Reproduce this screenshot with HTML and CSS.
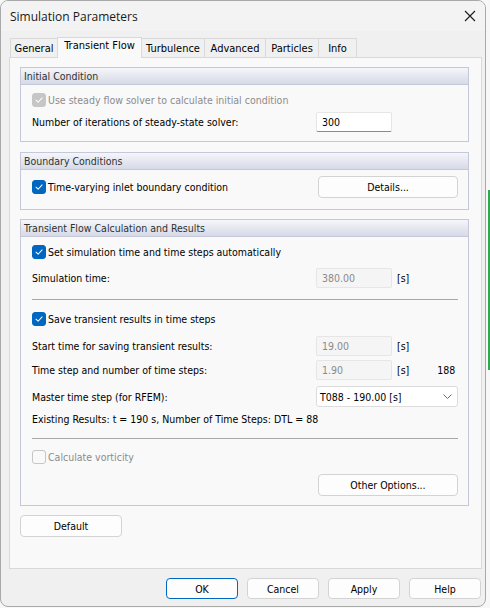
FILE: index.html
```html
<!DOCTYPE html>
<html lang="en">
<head>
<meta charset="utf-8">
<title>Simulation Parameters</title>
<link rel="stylesheet" href="styles.css">
</head>
<body>
<div class="desktop">
  <div class="window">
    <div class="titlebar">
      <span class="title">Simulation Parameters</span>
      <svg class="close" width="12" height="12" viewBox="0 0 12 12"><path d="M1 1 L11 11 M11 1 L1 11" stroke="#1a1a1a" stroke-width="1.1" fill="none"/></svg>
    </div>
    <div class="client">
      <div class="tabs">
        <div class="tab tab-general">General</div>
        <div class="tab tab-transient active">Transient Flow</div>
        <div class="tab tab-turbulence">Turbulence</div>
        <div class="tab tab-advanced">Advanced</div>
        <div class="tab tab-particles">Particles</div>
        <div class="tab tab-info">Info</div>
      </div>
      <div class="panel">
        <section class="group g-initial">
          <div class="group-head">Initial Condition</div>
          <div class="group-body">
            <div class="row">
              <span class="check checked disabled"><svg viewBox="0 0 14 14"><path d="M3.5 7.2 L6 9.6 L10.6 4.6" /></svg></span>
              <span class="label disabled-text">Use steady flow solver to calculate initial condition</span>
            </div>
            <div class="row m2">
              <span class="label field-label">Number of iterations of steady-state solver:</span>
              <span class="input">300</span>
            </div>
          </div>
        </section>

        <section class="group g-boundary">
          <div class="group-head">Boundary Conditions</div>
          <div class="group-body">
            <div class="row tall">
              <span class="check checked"><svg viewBox="0 0 14 14"><path d="M3.5 7.2 L6 9.6 L10.6 4.6" /></svg></span>
              <span class="label grow">Time-varying inlet boundary condition</span>
              <span class="button wide">Details...</span>
            </div>
          </div>
        </section>

        <section class="group g-transient">
          <div class="group-head">Transient Flow Calculation and Results</div>
          <div class="group-body">
            <div class="row">
              <span class="check checked"><svg viewBox="0 0 14 14"><path d="M3.5 7.2 L6 9.6 L10.6 4.6" /></svg></span>
              <span class="label">Set simulation time and time steps automatically</span>
            </div>
            <div class="row m6">
              <span class="label field-label">Simulation time:</span>
              <span class="input disabled">380.00</span>
              <span class="unit">[s]</span>
            </div>
            <div class="separator s1"></div>
            <div class="row m9">
              <span class="check checked"><svg viewBox="0 0 14 14"><path d="M3.5 7.2 L6 9.6 L10.6 4.6" /></svg></span>
              <span class="label">Save transient results in time steps</span>
            </div>
            <div class="row m7">
              <span class="label field-label">Start time for saving transient results:</span>
              <span class="input disabled">19.00</span>
              <span class="unit">[s]</span>
            </div>
            <div class="row m4">
              <span class="label field-label">Time step and number of time steps:</span>
              <span class="input disabled">1.90</span>
              <span class="unit">[s]</span>
              <span class="count">188</span>
            </div>
            <div class="row m6 tall21">
              <span class="label field-label">Master time step (for RFEM):</span>
              <span class="select">T088 - 190.00 [s]
                <svg class="chev" width="9" height="5" viewBox="0 0 9 5"><path d="M0.5 0.5 L4.5 4.5 L8.5 0.5" stroke="#6a6a6a" stroke-width="1" fill="none"/></svg>
              </span>
            </div>
            <div class="row m2">
              <span class="label">Existing Results: t = 190 s, Number of Time Steps: DTL = 88</span>
            </div>
            <div class="separator s2"></div>
            <div class="row m8">
              <span class="check disabled"></span>
              <span class="label disabled-text">Calculate vorticity</span>
            </div>
            <div class="row m7 tall end">
              <span class="button wide">Other Options...</span>
            </div>
          </div>
        </section>

        <div class="default-row">
          <span class="button default-btn">Default</span>
        </div>
      </div>
      <div class="footer">
        <span class="button foot focus">OK</span>
        <span class="button foot">Cancel</span>
        <span class="button foot">Apply</span>
        <span class="button foot">Help</span>
      </div>
    </div>
  </div>
  <div class="side-strip"></div>
</div>
</body>
</html>
```
FILE: styles.css
```css
* { box-sizing: border-box; }

html, body {
  margin: 0;
  padding: 0;
}

body {
  width: 490px;
  height: 608px;
  background: #f7f7f7;
  font-family: "DejaVu Sans Condensed", "DejaVu Sans", sans-serif;
  font-size: 10.5px;
  color: #000;
  overflow: hidden;
}

.desktop {
  position: relative;
  width: 490px;
  height: 608px;
}

/* thin strip of another window peeking out on the right */
.side-strip {
  position: absolute;
  left: 488px;
  top: 190px;
  width: 2px;
  height: 180px;
  background: #2fa84f;
}

.window {
  width: 486px;
  height: 607px;
  border: 1px solid #a9a9a9;
  border-radius: 8px;
  background: #f0f0f0;
  overflow: hidden;
  display: flex;
  flex-direction: column;
}

.titlebar {
  height: 30px;
  flex: none;
  display: flex;
  align-items: center;
  justify-content: space-between;
  padding: 0 9px 0 9px;
  background: #f3f3f3;
}

.title {
  font-family: "Open Sans", "Noto Sans", sans-serif;
  font-size: 12px;
  color: #1a1a1a;
  margin-top: 1px;
}

.client {
  flex: 1;
  display: flex;
  flex-direction: column;
  padding: 7px 0 0 8px;
}

/* tab strip */
.tabs {
  display: flex;
  align-items: flex-end;
  height: 19px;
  padding-left: 1px;
  position: relative;
  z-index: 1;
}

.tab {
  height: 19px;
  line-height: 19px;
  text-align: center;
  border: 1px solid #d9d9d9;
  border-bottom: none;
  border-left: none;
  background: #f0f0f0;
  color: #000;
  font-size: 11px;
}

.tab:first-child {
  border-left: 1px solid #d9d9d9;
}

.tab-general { width: 48px; }
.tab-transient { width: 85px; }
.tab-turbulence { width: 63px; }
.tab-advanced { width: 61px; }
.tab-particles { width: 53px; }
.tab-info { width: 38px; }

.tab.active {
  height: 21px;
  line-height: 16px;
  background: #f9f9f9;
  border-left: 1px solid #d9d9d9;
  margin-left: -1px;
  margin-bottom: -1px;
}

.tab.active + .tab {
  border-left: none;
}

.panel {
  width: 473px;
  height: 512px;
  border: 1px solid #d9d9d9;
  background: #f9f9f9;
  padding: 9px 12px 0 10px;
}

/* group boxes */
.group {
  border: 1px solid #c4c8d8;
  background: #f9f9f9;
}

.g-boundary { margin-top: 10px; }
.g-transient { margin-top: 9px; }

.group-head {
  height: 17px;
  line-height: 16px;
  padding-left: 3px;
  color: #303030;
  background: linear-gradient(#f5f6fa, #d6dae7);
  border-bottom: 1px solid #c4c8d8;
}

.group-body {
  padding: 5px 10px 9px 11px;
}

.g-boundary .group-body { padding-top: 6px; padding-bottom: 11px; }
.g-transient .group-body { padding-top: 5px; padding-bottom: 9px; }

.row {
  display: flex;
  align-items: center;
  height: 20px;
}

.row.tall { height: 22px; }
.row.tall21 { height: 21px; }
.row.end { justify-content: flex-end; }

.m2 { margin-top: 2px; }
.m4 { margin-top: 4px; }
.m6 { margin-top: 6px; }
.m7 { margin-top: 7px; }
.m8 { margin-top: 8px; }
.m9 { margin-top: 9px; }

.separator {
  height: 1px;
  background: #a8a8a8;
}

.separator.s1 { margin-top: 11px; }
.separator.s2 { margin-top: 9px; }

.label { white-space: nowrap; }
.label.grow { flex: 1; }
.field-label { width: 284px; flex: none; }
.disabled-text { color: #8c8c8c; }

.check {
  width: 14px;
  height: 14px;
  flex: none;
  border-radius: 3px;
  margin-right: 2px;
  border: 1px solid #8a8a8a;
  background: #fff;
}

.check svg {
  display: block;
  width: 12px;
  height: 12px;
}

.check svg path {
  fill: none;
  stroke: #fff;
  stroke-width: 1.2;
  stroke-linecap: round;
  stroke-linejoin: round;
}

.check.checked {
  background: #0067c0;
  border-color: #0067c0;
}

.check.checked.disabled {
  background: #c6c6c6;
  border-color: #c6c6c6;
}

.check.disabled {
  border-color: #c6c6c6;
  background: #f9f9f9;
}

.input {
  width: 76px;
  height: 20px;
  flex: none;
  line-height: 18px;
  padding-left: 5px;
  background: #fff;
  border: 1px solid #e6e6e6;
  border-bottom-color: #8a8a8a;
  border-radius: 2px;
}

.input.disabled {
  background: #f5f5f5;
  color: #8a8a8a;
  border-bottom-color: #e6e6e6;
}

.unit {
  margin-left: 5px;
}

.count {
  margin-left: 28px;
}

.select {
  width: 142px;
  height: 21px;
  flex: none;
  display: flex;
  align-items: center;
  justify-content: space-between;
  padding: 0 5px 0 3px;
  background: #fff;
  border: 1px solid #dcdcdc;
  border-radius: 3px;
}

.button {
  display: flex;
  align-items: center;
  justify-content: center;
  height: 22px;
  background: #fdfdfd;
  border: 1px solid #d3d3d3;
  border-radius: 4px;
  color: #000;
}

.button.wide {
  width: 140px;
  flex: none;
}

.default-row {
  margin-top: 9px;
}

.default-btn {
  width: 102px;
  height: 22px;
}

.footer {
  display: flex;
  justify-content: flex-end;
  gap: 9px;
  padding: 9px 4px 0 0;
}

.button.foot {
  width: 72px;
  height: 21px;
}

.button.focus {
  border-color: #0067c0;
}
```
